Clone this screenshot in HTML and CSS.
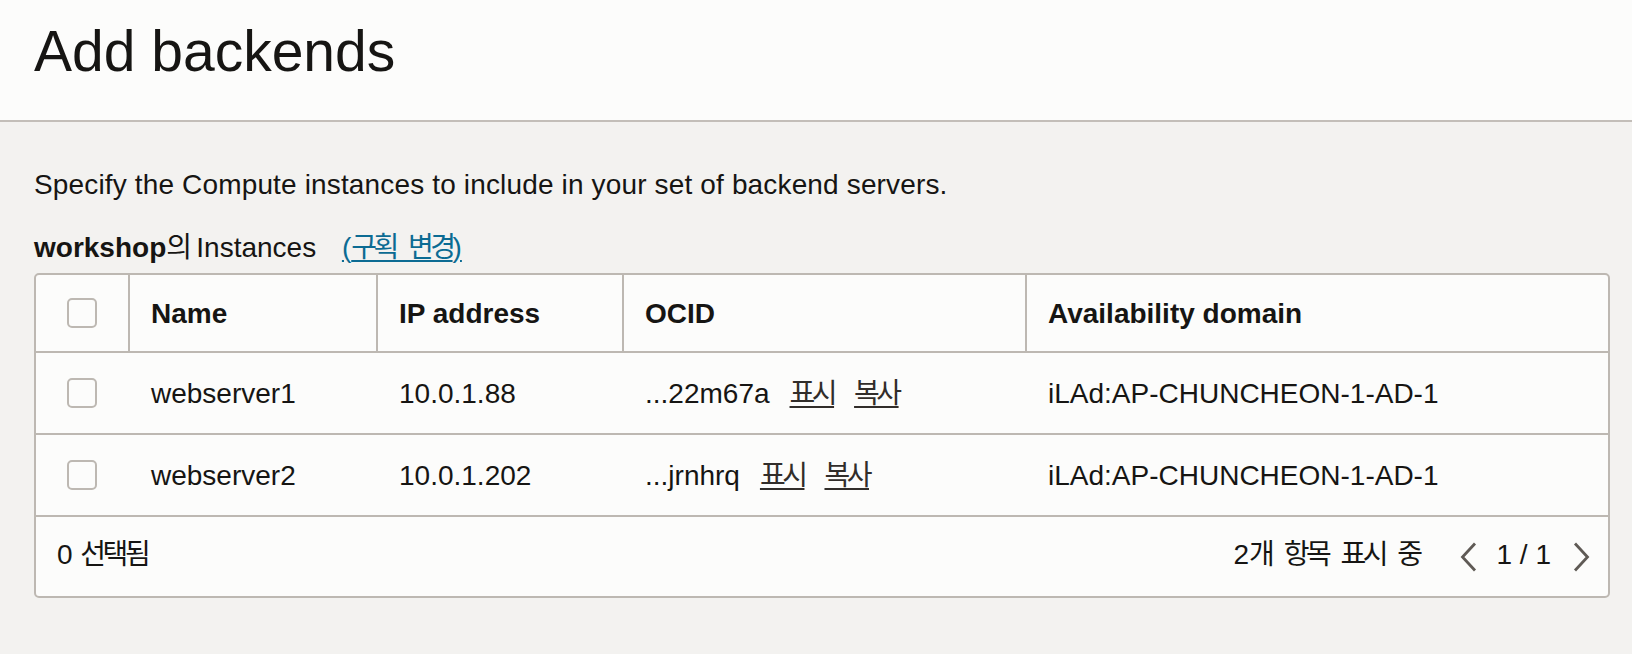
FILE: index.html
```html
<!DOCTYPE html>
<html lang="ko">
<head>
<meta charset="utf-8">
<title>Add backends</title>
<link rel="stylesheet" href="styles.css">
</head>
<body>
<header class="page-header">
  <h1 class="title">Add backends</h1>
</header>
<main class="content">
  <p class="desc">Specify the Compute instances to include in your set of backend servers.</p>
  <div class="label"><b>workshop</b><span class="ko">의</span> Instances <a class="change" href="#">(<span class="ko">구획 변경</span>)</a></div>
  <div class="table">
    <div class="row head">
      <div class="cell check"><span class="box"></span></div>
      <div class="cell">Name</div>
      <div class="cell">IP address</div>
      <div class="cell">OCID</div>
      <div class="cell">Availability domain</div>
    </div>
    <div class="row body">
      <div class="cell check"><span class="box"></span></div>
      <div class="cell">webserver1</div>
      <div class="cell">10.0.1.88</div>
      <div class="cell">...22m67a<a class="act ko" href="#">표시</a><a class="act ko" href="#">복사</a></div>
      <div class="cell">iLAd:AP-CHUNCHEON-1-AD-1</div>
    </div>
    <div class="row body">
      <div class="cell check"><span class="box"></span></div>
      <div class="cell">webserver2</div>
      <div class="cell">10.0.1.202</div>
      <div class="cell">...jrnhrq<a class="act ko" href="#">표시</a><a class="act ko" href="#">복사</a></div>
      <div class="cell">iLAd:AP-CHUNCHEON-1-AD-1</div>
    </div>
    <div class="footer">
      <div class="selected">0 <span class="ko">선택됨</span></div>
      <div class="pager">
        <span class="count">2<span class="ko">개 항목 표시 중</span></span>
        <svg class="chev" width="17" height="30" viewBox="0 0 17 30"><path d="M15 1.5 L2.5 15 L15 28.5" fill="none" stroke="currentColor" stroke-width="2.8"/></svg>
        <span class="page">1 / 1</span>
        <svg class="chev" width="17" height="30" viewBox="0 0 17 30"><path d="M2 1.5 L14.5 15 L2 28.5" fill="none" stroke="currentColor" stroke-width="2.8"/></svg>
      </div>
    </div>
  </div>
</main>
</body>
</html>
```
FILE: styles.css
```css
* { box-sizing: border-box; }
html, body { margin: 0; padding: 0; }
body {
  background: #f3f2f0;
  color: #161513;
  font-family: "Liberation Sans", "Noto Sans CJK KR", sans-serif;
  font-size: 28px;
  line-height: 32px;
}
.ko { letter-spacing: -0.125em; word-spacing: 8px; }

.page-header {
  background: #fcfcfb;
  border-bottom: 2px solid #c3beb9;
  padding: 19px 34px 37px;
}
.title {
  margin: 0;
  font-size: 57px;
  line-height: 64px;
  font-weight: 400;
}

.content {
  padding: 47px 22px 0 34px;
}
.desc { margin: 0 0 31px; letter-spacing: 0.15px; }
.label { margin: 0 0 9px; }
.label b { font-weight: 700; }
.change {
  color: #0b6b93;
  margin-left: 18px;
  text-decoration: underline;
  text-underline-offset: 3px;
}

.table {
  background: #fcfcfb;
  border: 2px solid #bdb8b2;
  border-radius: 5px;
}
.row {
  display: grid;
  grid-template-columns: 92px 248px 246px 403px 1fr;
  align-items: center;
  border-bottom: 2px solid #bdb8b2;
}
.row.head { height: 78px; align-items: stretch; font-weight: 700; }
.row.body { height: 82px; }
.cell {
  padding-left: 21px;
  padding-top: 2px;
  border-left: 2px solid transparent;
  display: flex;
  align-items: center;
  white-space: nowrap;
}
.row.head .cell { border-left-color: #bdb8b2; }
.row .cell.check {
  border-left: 0;
  padding-left: 0;
  padding-top: 0;
  justify-content: center;
}
.box {
  display: block;
  width: 30px;
  height: 30px;
  border: 2px solid #bdb8b2;
  border-radius: 5px;
  background: #fcfcfb;
}
.act {
  color: #312d2a;
  margin-left: 20px;
  text-decoration: underline;
  text-underline-offset: 3px;
}

.footer {
  height: 79px;
  display: flex;
  align-items: center;
  justify-content: space-between;
  padding: 0 18px 4px 21px;
}
.pager {
  display: flex;
  align-items: center;
}
.count { margin-right: 40px; }
.page { margin: 0 22px 0 20px; }
.chev { color: #5f5a55; display: block; margin-top: 4px; }
```
